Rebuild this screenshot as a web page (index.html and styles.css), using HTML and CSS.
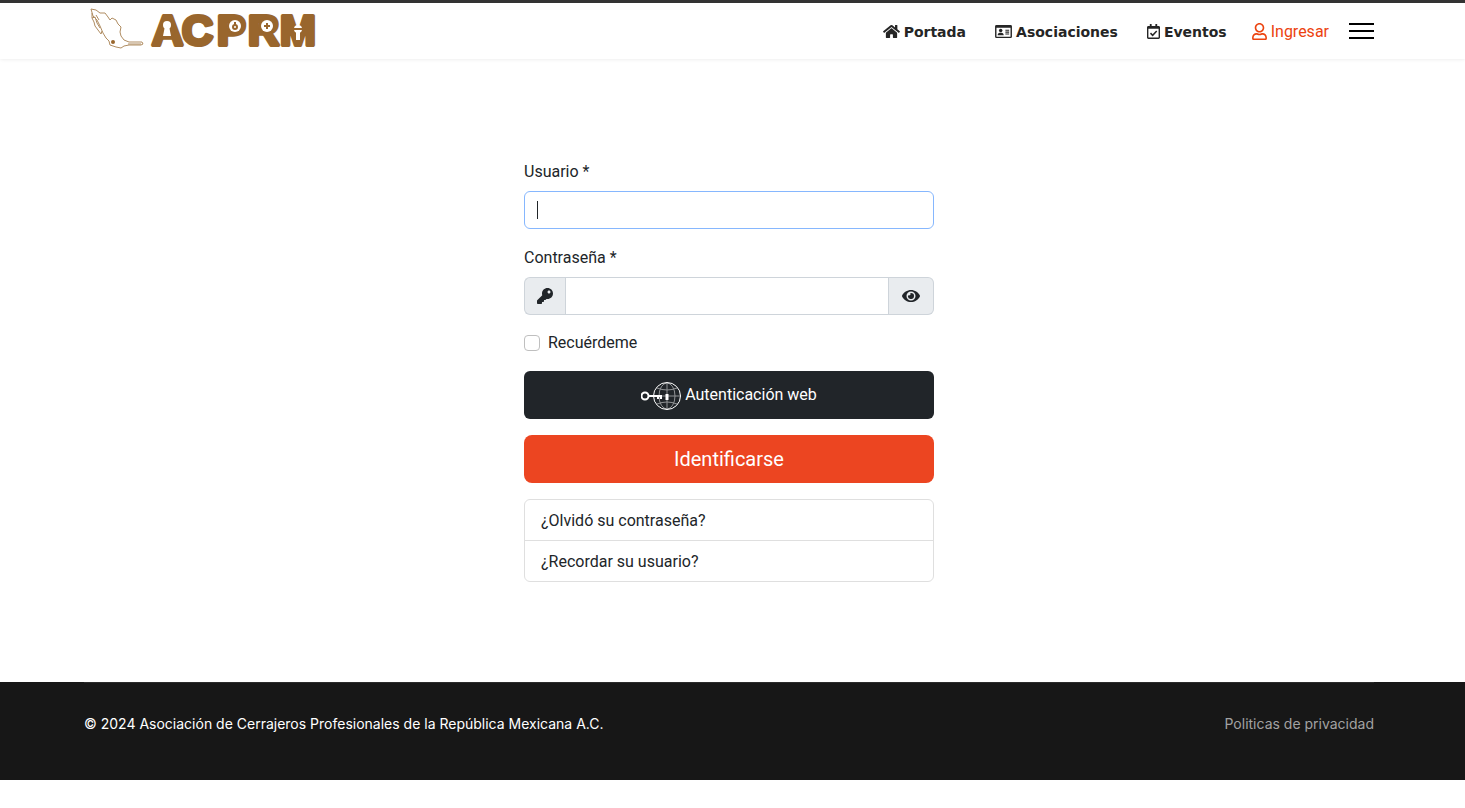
FILE: index.html
```
<!DOCTYPE html>
<html lang="es">
<head>
  <meta charset="UTF-8" />
  <title>ACPRM - Ingresar</title>
  <meta name="viewport" content="width=device-width, initial-scale=1.0" />
  <link rel="stylesheet" href="styles.css">
</head>
<body>
  <header class="site-header">
    <div class="container header-row">
      <a class="logo" href="#" aria-label="ACPRM">
        <svg width="240" height="50" viewBox="0 0 240 50">
          <!-- map with key -->
          <g fill="none" stroke="#b08d62" stroke-width="1" stroke-linejoin="round">
            <path d="M7 3L12 4L16 7L21 7L24 11L26 14L28 12L32 14L34 18L37 21L36 26L37 30L40 34L45 36L58 36L59 38L57 39L45 39L40 40L37 42L32 41L26 39L25 35L22 32L19 27L16 20L13 14L9 10L7 3Z"/>
            <path d="M8 7L8 12L10 16L11 20L14 24L17 28L18 25M8 12L11 11L13 17L16 22M12 9L15 14"/>
            <path d="M44 38h13"/>
          </g>
          <circle cx="29" cy="36" r="2" fill="#99662d"/>
          <text class="logo-text" x="68 98 133 164 196" y="39">ACPRM</text>
          <g class="logo-fill">
            <circle cx="83" cy="25" r="8"/>
            <circle cx="151" cy="20" r="8"/>
            <circle cx="182" cy="20" r="8"/>
          </g>
          <g fill="#fff">
            <circle cx="83" cy="19" r="4"/>
            <path d="M81 20h4l2 10h-8z"/>
            <circle cx="151" cy="20" r="6"/>
            <circle cx="183" cy="20" r="6"/>
            <circle cx="214" cy="23" r="4"/>
            <path d="M212 25h4v9h-4z"/>
          </g>
          <g fill="none" stroke="#99662d" stroke-width="2">
            <circle cx="151" cy="21" r="2"/>
            <path d="M151 16v4M183 17v6M180 20h6M210 23h8"/>
          </g>
        </svg>
      </a>
      <nav class="main-nav">
        <a class="nav-link" href="#">
          <svg width="17" height="15" viewBox="0 0 576 512"><path d="M280.37 148.26L96 300.11V464a16 16 0 0 0 16 16l112.06-.29a16 16 0 0 0 15.92-16V368a16 16 0 0 1 16-16h64a16 16 0 0 1 16 16v95.64a16 16 0 0 0 16 16.05L464 480a16 16 0 0 0 16-16V300L295.67 148.26a12.19 12.19 0 0 0-15.3 0zM571.6 251.47L488 182.56V44.05a12 12 0 0 0-12-12h-56a12 12 0 0 0-12 12v72.61L318.47 43a48 48 0 0 0-61 0L4.34 251.47a12 12 0 0 0-1.6 16.9l25.5 31A12 12 0 0 0 45.15 301l235.22-193.74a12.19 12.19 0 0 1 15.3 0L530.9 301a12 12 0 0 0 16.9-1.6l25.5-31a12 12 0 0 0-1.7-16.93z"/></svg>
          Portada
        </a>
        <a class="nav-link" href="#">
          <svg width="17" height="15" viewBox="0 0 576 512"><path fill-rule="evenodd" d="M48 32h480a48 48 0 0 1 48 48v352a48 48 0 0 1-48 48H48a48 48 0 0 1-48-48V80a48 48 0 0 1 48-48zM48 128v304h480V128z"/><circle cx="192" cy="224" r="60"/><path d="M88 384c0-50 35-84 70-84h68c35 0 70 34 70 84zM352 192h128v40H352zM352 256h128v40H352zM352 320h128v40H352z"/></svg>
          Asociaciones
        </a>
        <a class="nav-link" href="#">
          <svg width="13" height="15" viewBox="0 0 448 512"><path fill-rule="evenodd" d="M400 64h-48V12c0-6.600-5.400-12-12-12h-40c-6.600 0-12 5.400-12 12v52H160V12c0-6.600-5.400-12-12-12h-40c-6.600 0-12 5.400-12 12v52H48C21.500 64 0 85.500 0 112v352c0 26.500 21.500 48 48 48h352c26.500 0 48-21.500 48-48V112c0-26.500-21.500-48-48-48zm-6 400H54a6 6 0 0 1-6-6V160h352v298a6 6 0 0 1-6 6z"/><path d="M120 312l75 75 140-145" fill="none" stroke="currentColor" stroke-width="52"/></svg>
          Eventos
        </a>
      </nav>
      <a class="login-link" href="#">
        <svg width="15" height="17" viewBox="0 0 448 512"><path d="M313.600 304c-28.700 0-42.500 16-89.600 16-47.100 0-60.800-16-89.600-16C60.200 304 0 364.200 0 438.400V464c0 26.500 21.500 48 48 48h352c26.500 0 48-21.500 48-48v-25.600c0-74.200-60.200-134.400-134.400-134.400zM400 464H48v-25.600c0-47.600 38.800-86.400 86.400-86.400 14.600 0 38.300 16 89.600 16 51.700 0 74.900-16 89.600-16 47.600 0 86.400 38.800 86.400 86.400V464zM224 288c79.500 0 144-64.500 144-144S303.500 0 224 0 80 64.500 80 144s64.500 144 144 144zm0-240c52.900 0 96 43.100 96 96s-43.100 96-96 96-96-43.100-96-96 43.100-96 96-96z"/></svg>
        Ingresar
      </a>
      <button class="burger" type="button" aria-label="Menú"><span></span><span></span><span></span></button>
    </div>
  </header>

  <main class="container login-area">
    <form class="login-form">
      <label class="field-label" for="username">Usuario *</label>
      <input class="field" type="text" id="username" autofocus required>

      <label class="field-label" for="password">Contraseña *</label>
      <div class="input-group">
        <span class="addon">
          <svg width="16" height="16" viewBox="0 0 512 512"><path d="M512 176.001C512 273.203 433.202 352 336 352c-11.220 0-22.190-1.062-32.827-3.069l-24.012 27.014A23.999 23.999 0 0 1 261.223 384H224v40c0 13.255-10.745 24-24 24h-40v40c0 13.255-10.745 24-24 24H24c-13.255 0-24-10.745-24-24v-78.059c0-6.365 2.529-12.470 7.029-16.971l161.802-161.802C163.108 213.814 160 195.271 160 176 160 78.798 238.797.001 335.999 0 433.488-.001 512 78.511 512 176.001zM336 128c0 26.510 21.490 48 48 48s48-21.490 48-48-21.490-48-48-48-48 21.490-48 48z"/></svg>
        </span>
        <input class="field" type="password" id="password" required>
        <button class="addon" type="button" aria-label="Mostrar contraseña">
          <svg width="18" height="16" viewBox="0 0 576 512"><path d="M572.520 241.400C518.290 135.590 410.930 64 288 64S57.680 135.640 3.480 241.410a32.350 32.350 0 0 0 0 29.190C57.710 376.410 165.070 448 288 448s230.320-71.640 284.520-177.410a32.350 32.350 0 0 0 0-29.190zM288 400a144 144 0 1 1 144-144 143.930 143.930 0 0 1-144 144zm0-240a95.310 95.310 0 0 0-25.310 3.790 47.850 47.850 0 0 1-66.900 66.900A95.780 95.780 0 1 0 288 160z"/></svg>
        </button>
      </div>

      <div class="remember">
        <input type="checkbox" id="remember">
        <label for="remember">Recuérdeme</label>
      </div>

      <button class="btn btn-dark" type="button">
        <svg class="webauthn-icon" width="40" height="30" viewBox="0 0 40 30">
          <circle cx="26" cy="16" r="13.500"/>
          <g opacity=".5">
            <ellipse cx="26" cy="16" rx="8" ry="13"/>
            <path d="M26 3v26M13 16h26M16 8q10 4 20 0M16 24q10-4 20 0"/>
          </g>
          <circle cx="4" cy="16" r="3.500" stroke-width="2"/>
          <path d="M8 16h12M17 16v3M20 15v4" stroke-width="2"/>
          <path d="M26 14v6" stroke-width="3"/>
        </svg>
        Autenticación web
      </button>
      <button class="btn btn-primary" type="submit">Identificarse</button>

      <div class="help-links">
        <a href="#">¿Olvidó su contraseña?</a>
        <a href="#">¿Recordar su usuario?</a>
      </div>
    </form>
  </main>

  <footer class="site-footer">
    <div class="container">
      <div class="footer-row">
        <span>© 2024 Asociación de Cerrajeros Profesionales de la República Mexicana A.C.</span>
        <a href="#">Politicas de privacidad</a>
      </div>
    </div>
  </footer>
</body>
</html>
```
FILE: styles.css
```
* {
  box-sizing: border-box;
}
body {
  margin: 0;
  background: #fff;
  color: #212529;
  font-family: Roboto, sans-serif;
  font-size: 16px;
  line-height: 24px;
}
a {
  text-decoration: none;
}
svg {
  fill: currentColor;
  flex: none;
}
.container {
  padding: 0 91px 0 84px;
}
.site-header {
  border-top: 3px solid #333;
  box-shadow: 0 0 4px rgba(0, 0, 0, 0.1);
}
.header-row {
  display: flex;
  align-items: center;
  height: 56px;
}
.logo {
  display: flex;
  margin-right: auto;
}
.logo-text {
  font-family: "Liberation Sans", Arial, sans-serif;
  font-size: 43px;
  font-weight: bold;
  fill: #99662d;
  stroke: #99662d;
  stroke-width: 4px;
  stroke-linejoin: round;
}
.logo-fill {
  fill: #99662d;
}
.main-nav {
  display: flex;
  gap: 29px;
}
.nav-link {
  display: flex;
  align-items: center;
  gap: 4px;
  padding-top: 1px;
  color: #252525;
  font-family: "DejaVu Sans", Verdana, sans-serif;
  font-size: 14px;
  font-weight: bold;
}
.login-link {
  display: flex;
  align-items: center;
  gap: 4px;
  margin: 0 20px 0 25px;
  padding-top: 1px;
  color: #ec430f;
}
.burger {
  display: flex;
  flex-direction: column;
  gap: 5px;
  width: 25px;
  padding: 0;
  border: none;
  background: none;
  cursor: pointer;
}
.burger span {
  height: 2px;
  background: #000;
}
.login-area {
  display: flex;
  justify-content: center;
  padding-top: 100px;
  padding-bottom: 100px;
}
.login-form {
  width: 100%;
  max-width: 410px;
}
.field-label {
  display: block;
  padding-top: 1px;
  margin-bottom: 7px;
}
.field {
  display: block;
  width: 100%;
  height: 38px;
  margin-bottom: 16px;
  padding: 6px 12px;
  border: 1px solid #ced4da;
  border-radius: 6px;
  color: #212529;
  font: inherit;
  outline: none;
}
.field:focus {
  border-color: #86b7fe;
}
/* steady cursor while the field is still empty */
.field:focus:invalid {
  background: linear-gradient(#212529, #212529) 12px center / 1px 18px no-repeat;
  caret-color: transparent;
}
.input-group {
  display: flex;
  margin-bottom: 16px;
}
.input-group .field {
  flex: 1;
  min-width: 0;
  margin: 0;
  border-radius: 0;
}
.addon {
  display: flex;
  align-items: center;
  padding: 0 12px;
  border: 1px solid #ced4da;
  border-right: none;
  border-radius: 6px 0 0 6px;
  background: #e9ecef;
  color: #212529;
}
button.addon {
  padding: 0 13px;
  border-right: 1px solid #ced4da;
  border-left: none;
  border-radius: 0 6px 6px 0;
}
.remember {
  display: flex;
  align-items: center;
  gap: 8px;
  margin-bottom: 16px;
}
.remember input {
  width: 16px;
  height: 16px;
  margin: 0;
  border: 1px solid #bfbfbf;
  border-radius: 4px;
  appearance: none;
}
.btn {
  display: flex;
  align-items: center;
  justify-content: center;
  gap: 4px;
  width: 100%;
  height: 48px;
  margin-bottom: 16px;
  border: none;
  border-radius: 6px;
  color: #fff;
  font: inherit;
  cursor: pointer;
}
.btn-dark {
  background: #212529;
}
.webauthn-icon {
  fill: none;
  stroke: #fff;
}
.btn-primary {
  border-radius: 8px;
  background: #ec4521;
  font-size: 20px;
}
.help-links {
  border: 1px solid #dfdfdf;
  border-radius: 6px;
}
.help-links a {
  display: block;
  padding: 9px 16px 7px;
  color: #212529;
}
.help-links a + a {
  border-top: 1px solid #dfdfdf;
}
.site-footer {
  background: #171717;
  color: #fff;
  font-family: Inter, sans-serif;
  font-size: 14px;
}
.footer-row {
  display: flex;
  justify-content: space-between;
  padding: 29px 0 44px;
  border-top: 1px solid #2b2b2b;
}
.footer-row a {
  color: #a2a2a2;
}
```
